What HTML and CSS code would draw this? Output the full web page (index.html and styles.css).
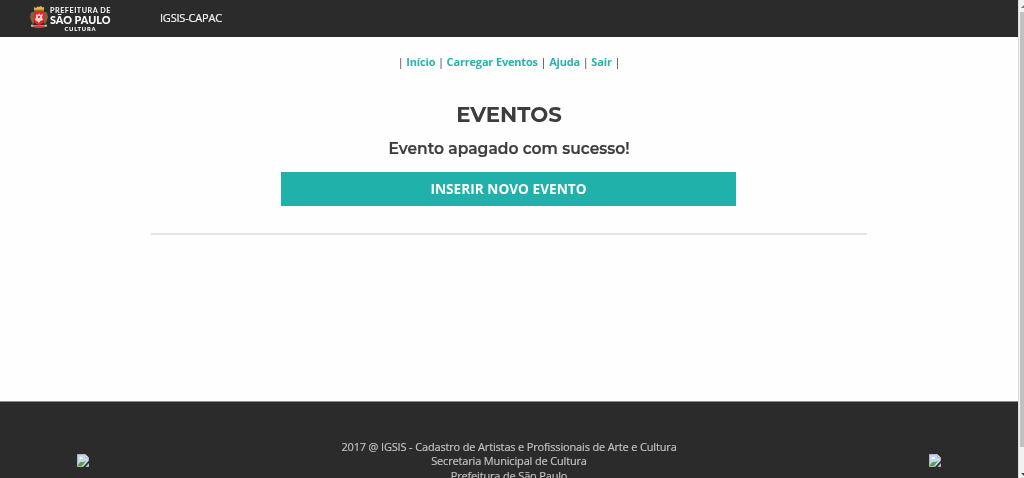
FILE: index.html
```html
<!DOCTYPE html>
<html lang="pt-BR">
<head>
<meta charset="utf-8">
<title>IGSIS-CAPAC</title>
<link rel="stylesheet" href="styles.css">
</head>
<body>
<svg class="defs" aria-hidden="true">
  <symbol id="broken" viewBox="0 0 12 13">
    <path d="M.5.5h8l3 3v9H.5z" fill="#c5d7f3" stroke="#b5b5b5"/>
    <path d="M8.500 .5v3h3z" fill="#fff" stroke="#999" stroke-width=".6"/>
    <path d="M2.500 5q0-2 1.700-2 1.800 0 2 2z" fill="#fff"/>
    <path d="M1 11q2-4 5-3l3-1-4 5H1z" fill="#4fa83c"/>
    <path d="M6 13l6-6.500V9l-3.500 4z" fill="#2b2b2b"/>
    <path d="M9 12.500l2.500-2.500v2.500z" fill="#b5c9b5"/>
  </symbol>
</svg>
<div class="page">
  <header class="topbar">
    <svg class="logo" width="84" height="28" viewBox="0 0 84 28">
      <path d="M5 6V3l2 1 1.500-1.500L10 3l2-1 1.500 1.500L15 3v3z" fill="#e8b84a"/>
      <path d="M5 5.500h10v1.300H5z" fill="#b98332"/>
      <path d="M3 8q-3 4-1 8l2 5 2-5V8zM17 8q3 4 1 8l-2 5-2-5V8z" fill="#58733b"/>
      <path d="M2 9l2 2-2 2 2 2-1 3M18 9l-2 2 2 2-2 2 1 3" fill="none" stroke="#d43d32" stroke-width="1.200"/>
      <path d="M5 7h10v9q0 4-5 5-5-1-5-5z" fill="#e8242b"/>
      <path d="M7 10l2 1 1-2 1 2 3-1-1 3 1 3-3 1-1 2-2-2-2-1 1-3z" fill="#f5d5cf"/>
      <path d="M9 12h2v2H9z" fill="#d93a3a"/>
      <path d="M2 20.500q8 2 16 0v2q-8 2-16 0z" fill="#d9b9a5"/>
      <path d="M4 22q6 1.500 12 0" fill="none" stroke="#d62c2c"/>
      <text class="logo-a" x="21" y="8.500" textLength="60.500">PREFEITURA DE</text>
      <text class="logo-b" x="21" y="20" textLength="60.500">SÃO PAULO</text>
      <text class="logo-c" x="35.500" y="26.600" textLength="31">CULTURA</text>
    </svg>
    <span class="brand">IGSIS-CAPAC</span>
  </header>
  <main class="content">
    <nav class="menu">| <a>Início</a> | <a>Carregar Eventos</a> | <a>Ajuda</a> | <a>Sair</a> |</nav>
    <h1 class="title">EVENTOS</h1>
    <h2 class="message">Evento apagado com sucesso!</h2>
    <button class="insert">INSERIR NOVO EVENTO</button>
    <hr class="rule">
  </main>
  <footer class="footer">
    <svg class="broken" width="12" height="13"><use href="#broken"/></svg>
    <div class="credits">2017 @ IGSIS - Cadastro de Artistas e Profissionais de Arte e Cultura<br>Secretaria Municipal de Cultura<br>Prefeitura de São Paulo</div>
    <svg class="broken" width="12" height="13"><use href="#broken"/></svg>
  </footer>
</div>
<div class="scrollbar">
  <svg class="arrow" width="6" height="12"><path d="M2 8l3-3h1v3z" fill="#777"/></svg>
  <div class="thumb"></div>
  <svg class="arrow" width="6" height="8"><path d="M2 3h4v3H5z" fill="#444"/></svg>
</div>
</body>
</html>
```
FILE: styles.css
```css
* { box-sizing: border-box; }
body {
  margin: 0;
  height: 478px;
  display: flex;
  overflow: hidden;
  background: #fefefe;
  color: #3d3d3d;
  font-family: "Open Sans", sans-serif;
}
.defs { position: absolute; width: 0; height: 0; }
.page {
  width: 1018px;
  height: 478px;
  display: flex;
  flex-direction: column;
  overflow: hidden;
  will-change: transform;
}
.topbar {
  height: 37px;
  flex: none;
  display: flex;
  background: #2b2b2b;
  padding-left: 29px;
}
.logo { margin-top: 4px; font-family: Lato, sans-serif; fill: #fff; }
.logo-a { font-size: 7.200px; font-weight: 700; }
.logo-b { font-size: 10.800px; font-weight: 900; }
.logo-c { font-size: 5.800px; font-weight: 900; }
.brand {
  margin-left: 47px;
  font-size: 11px;
  line-height: 36px;
  letter-spacing: -0.2px;
  color: #f4f4f4;
  -webkit-text-stroke: 0.2px #f4f4f4;
}
.content {
  height: 365px;
  flex: none;
  display: flex;
  flex-direction: column;
  align-items: center;
  padding-top: 17px;
  border-bottom: 1px solid #8c8c8c;
}
.menu { font-size: 11px; line-height: 16px; letter-spacing: -0.170px; }
.menu a { color: #29b3ab; font-weight: 700; }
.title, .message { font-family: Montserrat, Inter, sans-serif; margin: 0; }
.title { margin-top: 30px; font-size: 21.300px; line-height: 28px; font-weight: 700; }
.message {
  margin-top: 11px;
  font-size: 15.500px;
  line-height: 20px;
  font-weight: 600;
  -webkit-text-stroke: 0.2px #3d3d3d;
}
.insert {
  margin: 13px 1px 0 0;
  width: 455px;
  height: 34px;
  padding: 0;
  border: 0;
  background: #20b2aa;
  color: #fff;
  font: 700 13.650px/34px "Open Sans", sans-serif;
}
.rule { width: 716px; height: 2px; margin: 27px 0 0; border: 0; background: #e6e6e5; }
.footer {
  flex: 1;
  display: flex;
  justify-content: space-between;
  align-items: flex-start;
  padding: 38px 77px 0;
  background: #2b2b2b;
}
.broken { margin-top: 14px; }
.credits {
  font-size: 11px;
  line-height: 14.300px;
  letter-spacing: -0.160px;
  text-align: center;
  color: #c4c4c4;
  -webkit-text-stroke: 0.15px #c4c4c4;
}
.scrollbar {
  width: 6px;
  height: 478px;
  display: flex;
  flex-direction: column;
  background: #f1f1f1;
  border-left: 1px solid #ddd;
}
.arrow { flex: none; }
.thumb { height: 435px; margin-left: 1px; background: #c1c1c1; }
.scrollbar .arrow:last-child { margin-top: 23px; }
```
